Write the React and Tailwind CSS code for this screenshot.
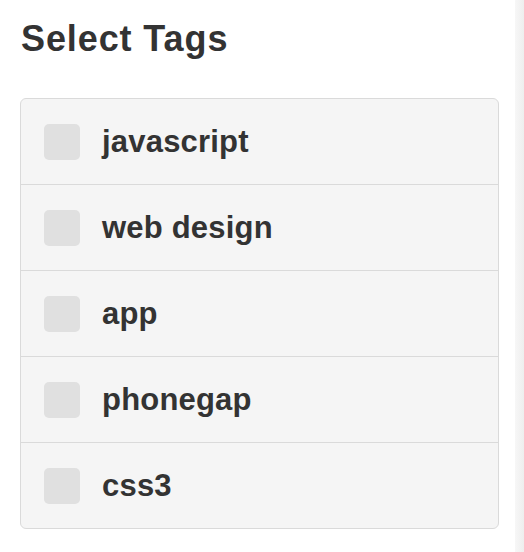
import React from "react";

const tags = ["javascript", "web design", "app", "phonegap", "css3"];

export default function App() {
  return (
    <div className="flex min-h-[552px] w-[524px] bg-white font-['Liberation_Sans',Arial,sans-serif] text-[#333]">
      <div className="flex-1 pt-[19px] pl-[20px] pr-[16px]">
        {/* Heading */}
        <h3 className="pl-px text-[36px] font-bold leading-[40px] tracking-[0.9px]">Select Tags</h3>

        {/* Tag list */}
        <ul className="mt-[39px] w-[479px] overflow-hidden rounded-[6px] border border-[#dadada] bg-[#f5f5f5]">
          {tags.map((tag) => (
            <li
              key={tag}
              className="flex h-[85px] items-center gap-[22px] border-t border-[#dadada] pl-[23px] first:border-t-0 [&:not(:first-child)]:h-[86px]"
            >
              <span className="h-[36px] w-[36px] shrink-0 rounded-[5px] bg-[#e0e0e0]" />
              <span className="text-[31px] font-bold leading-none tracking-[0.2px]">{tag}</span>
            </li>
          ))}
        </ul>
      </div>

      {/* Right edge */}
      <div className="w-[9px] bg-gradient-to-r from-[#f7f7f7] to-[#eeeeee]" />
    </div>
  );
}
